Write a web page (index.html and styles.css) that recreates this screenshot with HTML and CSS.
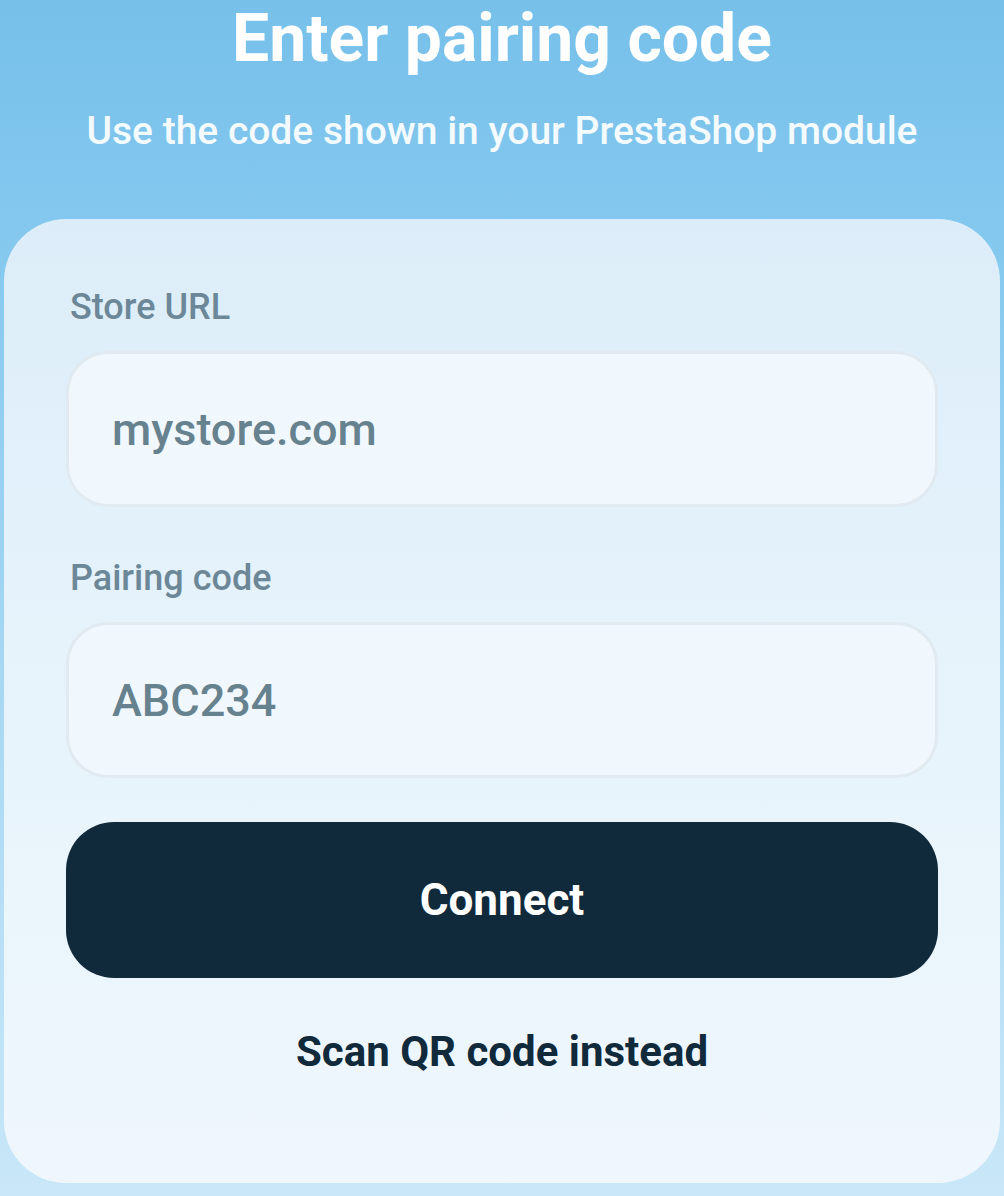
FILE: index.html
```html
<!DOCTYPE html>
<html lang="en">
<head>
<meta charset="utf-8">
<title>Enter pairing code</title>
<link rel="stylesheet" href="styles.css">
</head>
<body>
<div class="screen">
  <header class="header">
    <h1 class="title">Enter pairing code</h1>
    <p class="subtitle">Use the code shown in your PrestaShop module</p>
  </header>
  <main class="card">
    <div class="field">
      <label class="label">Store URL</label>
      <div class="input">mystore.com</div>
    </div>
    <div class="field">
      <label class="label">Pairing code</label>
      <div class="input">ABC234</div>
    </div>
    <button class="btn-primary" type="button">Connect</button>
    <button class="btn-link" type="button">Scan QR code instead</button>
  </main>
</div>
</body>
</html>
```

FILE: styles.css
```css
* { box-sizing: border-box; }
html, body { margin: 0; padding: 0; }
body {
  font-family: Roboto, "Liberation Sans", sans-serif;
  background: linear-gradient(180deg, #76c0ea 0%, #86c9ef 22%, #a9d9f4 60%, #c9e7f8 100%);
  min-height: 1196px;
}
.screen {
  display: flex;
  flex-direction: column;
  align-items: stretch;
}
.header {
  display: flex;
  flex-direction: column;
  align-items: center;
  padding-top: 6px;
}
.title {
  margin: 0;
  font-size: 66px;
  line-height: 66px;
  font-weight: 700;
  color: #ffffff;
}
.subtitle {
  margin: 40px 0 0;
  font-size: 39px;
  line-height: 39px;
  font-weight: 500;
  color: #f4fbff;
}
.card {
  margin: 68px 4px 0;
  height: 964px;
  border-radius: 62px;
  background: linear-gradient(180deg, #dcedf9 0%, #e6f3fb 45%, #eff7fd 100%);
  padding: 70px 62px 0;
  display: flex;
  flex-direction: column;
}
.field {
  display: flex;
  flex-direction: column;
}
.field + .field { margin-top: 53px; }
.label {
  font-size: 36px;
  line-height: 36px;
  font-weight: 500;
  color: #6c8797;
  padding-left: 4px;
}
.input {
  margin-top: 26px;
  height: 156px;
  border: 3px solid #e1eaf0;
  border-radius: 42px;
  background: #f1f8fd;
  display: flex;
  align-items: center;
  padding-left: 43px;
  font-size: 45px;
  font-weight: 500;
  color: #67828f;
}
.btn-primary {
  margin-top: 44px;
  height: 156px;
  border: none;
  border-radius: 48px;
  background: #102a3c;
  color: #ffffff;
  font-family: inherit;
  font-size: 44px;
  font-weight: 700;
  cursor: pointer;
}
.btn-link {
  margin-top: 53px;
  border: none;
  background: none;
  padding: 0;
  font-family: inherit;
  font-size: 42px;
  line-height: 42px;
  font-weight: 700;
  color: #102a3b;
  cursor: pointer;
}
```
